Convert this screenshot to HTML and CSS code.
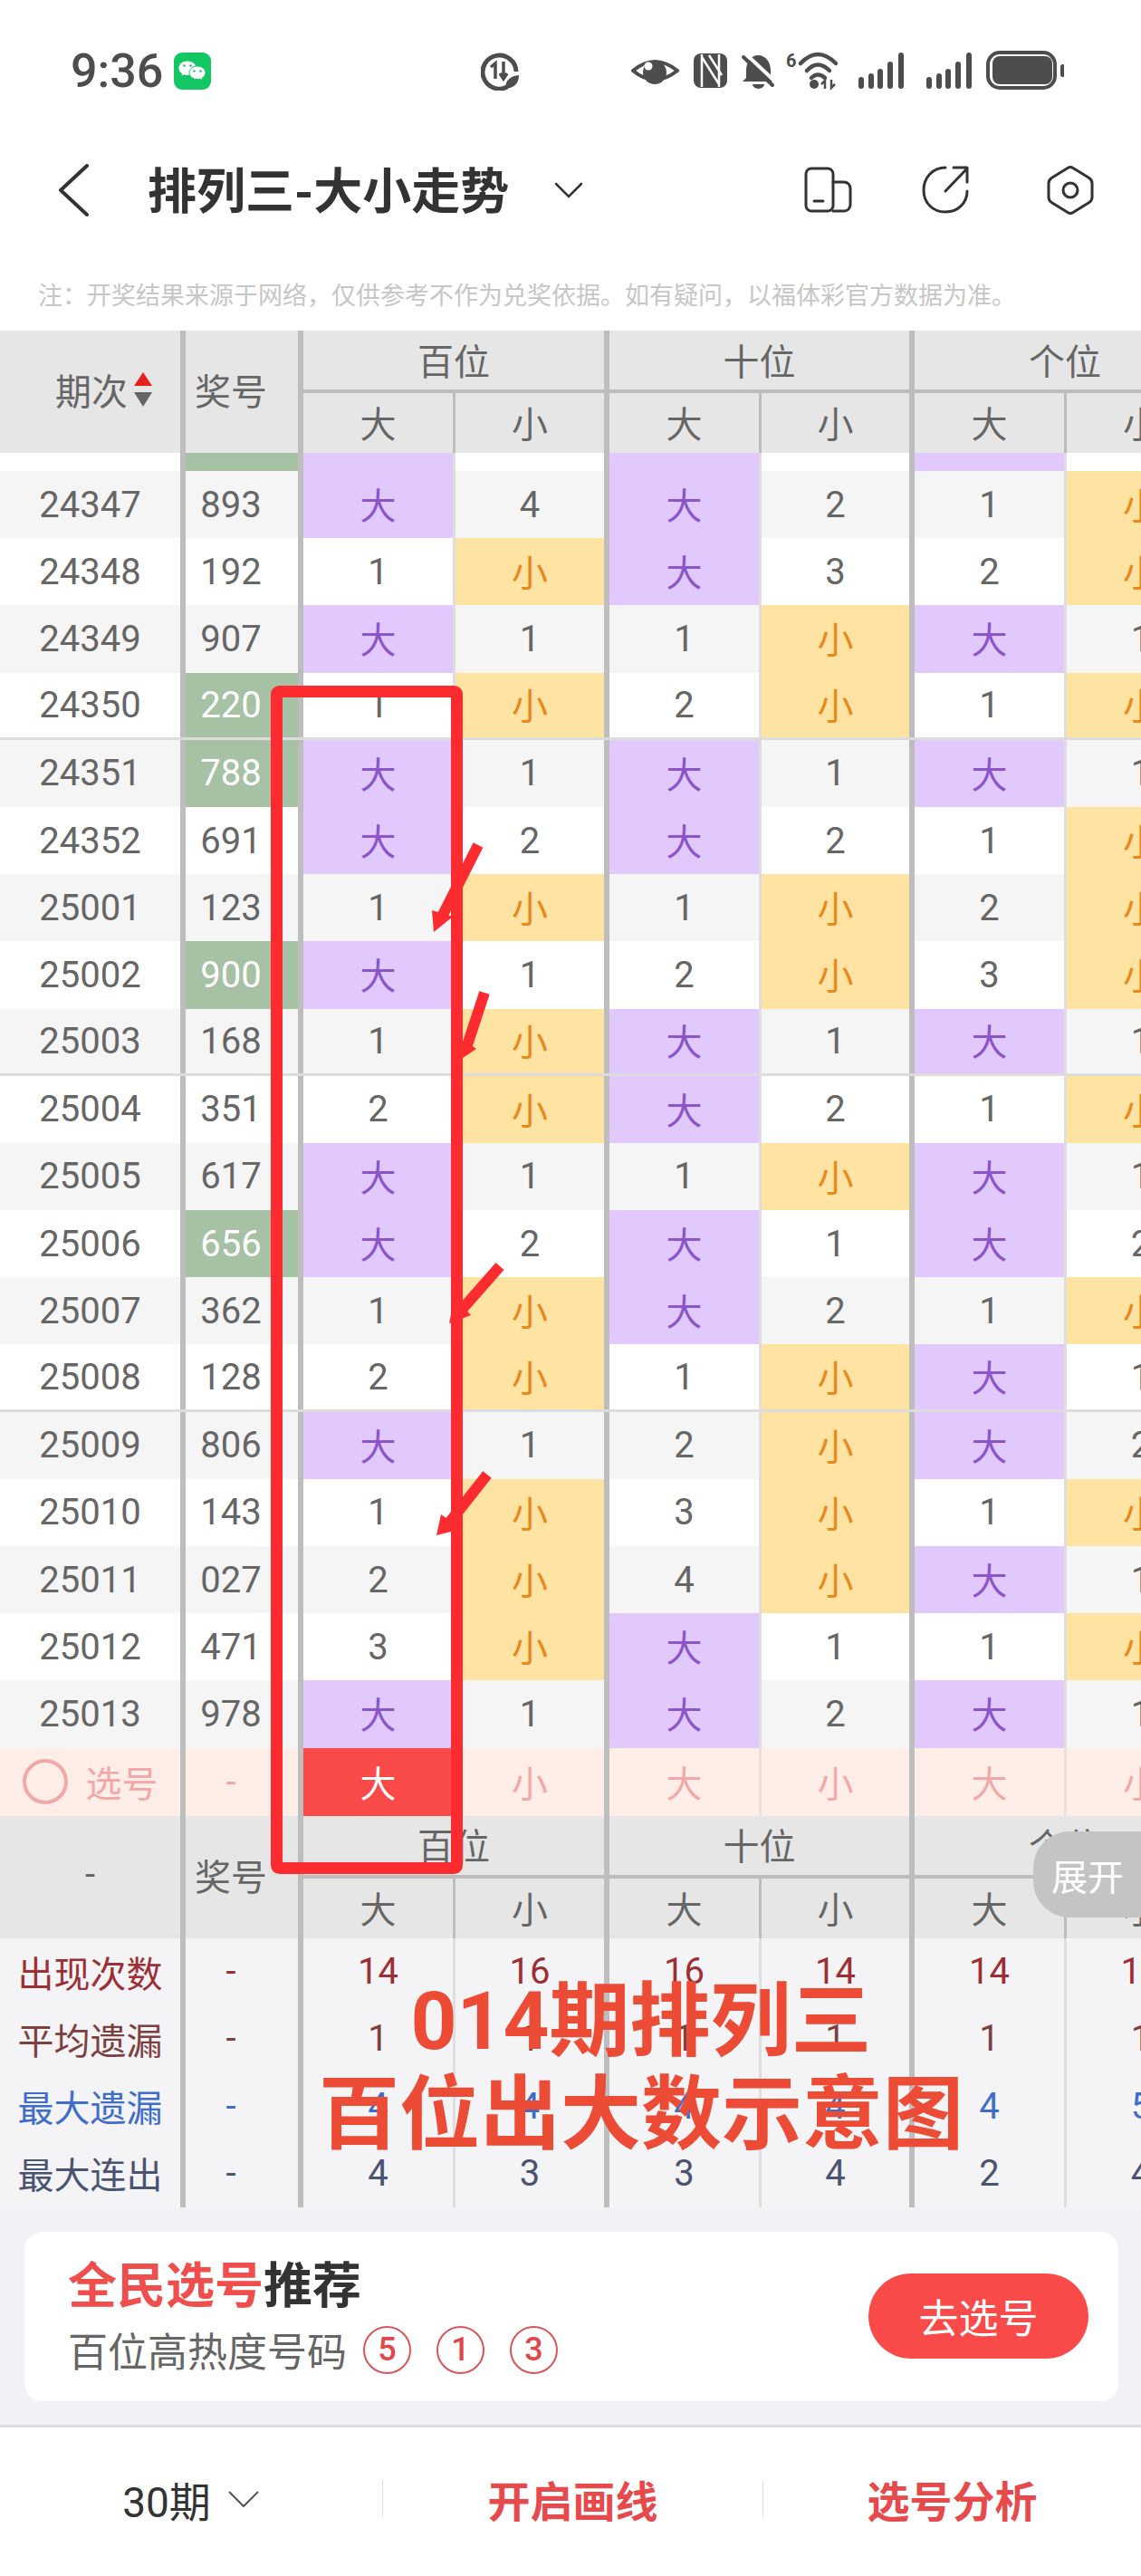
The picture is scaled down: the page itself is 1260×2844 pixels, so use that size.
FILE: index.html
```html
<!DOCTYPE html>
<html lang="zh-CN">
<head>
    <meta charset="UTF-8">
    <title>排列三-大小走势</title>
    <link rel="stylesheet" href="styles.css">
</head>
<body>
<div class="page">
    <!-- 状态栏 -->
    <div class="status">
        <span class="time">9:36</span>
        <svg class="wechat" width="41" height="41" viewBox="0 0 41 41">
            <rect width="41" height="41" rx="9" fill="#14c765"/>
            <path d="M15 9c-6 0-10 3.800-10 8.300 0 2.600 1.400 4.800 3.700 6.300l-.9 3 3.400-1.800c1.200.4 2.500.6 3.800.6C21 25.400 25 21.700 25 17.300 25 12.800 21 9 15 9z" fill="#fff" stroke="#14c765" stroke-width="1"/>
            <path d="M26 15c-5 0-9 3.300-9 7.300s4 7.300 9 7.300c1 0 2-.1 3-.4l3 1.600-.8-2.700c2.300-1.300 3.800-3.500 3.800-5.800 0-4-4-7.300-9-7.300z" fill="#fff" stroke="#14c765" stroke-width="1"/>
            <circle cx="11.500" cy="14.500" r="1.300" fill="#14c765"/><circle cx="18.500" cy="14.500" r="1.300" fill="#14c765"/>
            <circle cx="22.500" cy="20.500" r="1.200" fill="#14c765"/><circle cx="29.500" cy="20.500" r="1.200" fill="#14c765"/>
        </svg>
        <svg class="net" width="42" height="44" viewBox="531 56 42 44" fill="none" stroke="#4d4d4d">
            <path d="M560 96A18.500 18.500 0 1 1 570 79" stroke-width="5"/>
            <path d="M547 87V70L542 74M556 68V86M552 81L556 87L560 81" stroke-width="3.500"/>
            <path d="M558 98C558 88 564 84 573 83C573 92 568 97 558 98Z" fill="#4d4d4d" stroke="none"/>
        </svg>
        <svg class="tray" width="478" height="46" viewBox="697 55 478 46" fill="none" stroke="#4d4d4d">
            <path d="M699 78Q723 58 748 78Q723 98 699 78Z" stroke-width="4" stroke-linejoin="round"/>
            <circle cx="723" cy="80" r="13" fill="#4d4d4d" stroke="none"/>
            <circle cx="716" cy="73" r="4.500" fill="#fff" stroke="none"/>
            <rect x="766" y="59" width="37" height="38" rx="8" fill="#4d4d4d" stroke="none"/>
            <path d="M775 60V96M794 60V96M775 63L794 93M783 61L797 83" stroke="#fff" stroke-width="2.500"/>
            <path d="M837 61C846 61 851 69 851 78V86L855 90H820L824 86V78C824 69 829 61 837 61Z" fill="#4d4d4d" stroke="none"/>
            <path d="M831 93H844A6.500 5 0 0 1 831 93Z" fill="#4d4d4d" stroke="none"/>
            <path d="M824 60L857 91" stroke="#fff" stroke-width="4"/>
            <path d="M821 63L853 94" stroke-width="4" stroke-linecap="round"/>
            <text class="wifi-six" x="868" y="74">6</text>
            <path d="M884 70Q903 50 923 70M891 78Q903 65 916 78M896 86Q903 79 911 86" stroke-width="4.500" stroke-linecap="round"/>
            <circle cx="899" cy="93" r="5" fill="#4d4d4d" stroke="none"/>
            <path d="M911 98V89L907 93M918 88V97L922 93" stroke-width="2.500"/>
            <g stroke-width="6" stroke-linecap="round">
                <path d="M951 88V95M962 84V95M972 79V95M983 71V95M995 61V95"/>
                <path d="M1026 88V95M1037 84V95M1047 79V95M1058 71V95M1070 61V95"/>
            </g>
            <rect x="1091" y="58" width="74" height="39" rx="13" stroke-width="4"/>
            <rect x="1096" y="62" width="66" height="31" rx="8" fill="#4d4d4d" stroke="none"/>
            <rect x="1171" y="71" width="5" height="14" rx="2.500" fill="#4d4d4d" stroke="none"/>
        </svg>
    </div>

    <!-- 标题栏 -->
    <div class="nav">
        <svg class="back" width="35" height="58" viewBox="64 182 35 58" fill="none" stroke="#333" stroke-width="4" stroke-linecap="round" stroke-linejoin="round">
            <path d="M96 184L67 211L96 238"/>
        </svg>
        <h1 class="title">排列三-大小走势</h1>
        <svg class="drop" width="32" height="18" viewBox="612 201 32 18" fill="none" stroke="#333" stroke-width="2.500" stroke-linecap="round">
            <path d="M614 203L628 217L642 203"/>
        </svg>
        <div class="nav-tools">
            <svg width="54" height="52" viewBox="890 187 54 52" fill="none" stroke="#333" stroke-width="3" stroke-linecap="round">
                <rect x="892" y="189" width="30" height="47" rx="6"/>
                <path d="M922 204H934A7 7 0 0 1 941 211V229A7 7 0 0 1 934 236H922M901 225H911"/>
            </svg>
            <svg width="52" height="54" viewBox="1019 186 52 54" fill="none" stroke="#333" stroke-width="3" stroke-linecap="round" stroke-linejoin="round">
                <path d="M1045 188C1031 188 1021 199 1021 213C1021 227 1031 237 1045 237C1059 237 1069 227 1069 214"/>
                <path d="M1045 214L1068 190M1054 188H1069V204"/>
            </svg>
            <svg width="52" height="56" viewBox="1156 184 52 56" fill="none" stroke="#333" stroke-width="3">
                <path d="M1179 187.500Q1182 185.500 1185 187.500L1202 198Q1206 200.500 1206 204V220Q1206 223.500 1202 226L1185 236.500Q1182 238.500 1179 236.500L1162 226Q1158 223.500 1158 220V204Q1158 200.500 1162 198Z"/>
                <circle cx="1182" cy="212" r="8"/>
            </svg>
        </div>
    </div>

    <p class="note">注：开奖结果来源于网络，仅供参考不作为兑奖依据。如有疑问，以福体彩官方数据为准。</p>

    <!-- 走势表 -->
    <div class="chart">
        <div class="head">
            <div class="head-cell span-rows issue">期次<span class="sort"><i class="up"></i><i class="down"></i></span></div>
            <div class="head-cell span-rows prize">奖号</div>
            <div class="head-cell group">百位</div>
            <div class="head-cell group">十位</div>
            <div class="head-cell group">个位</div>
            <div class="head-cell">大</div><div class="head-cell thick">小</div>
            <div class="head-cell">大</div><div class="head-cell thick">小</div>
            <div class="head-cell">大</div><div class="head-cell thick">小</div>
        </div>

        <div class="row sliver"><span></span><span class="hit"></span><span class="da"></span><span></span><span class="da"></span><span></span><span class="da"></span><span></span></div>
        <div class="row"><span>24347</span><span>893</span><span class="da">大</span><span>4</span><span class="da">大</span><span>2</span><span>1</span><span class="xiao">小</span></div>
        <div class="row"><span>24348</span><span>192</span><span>1</span><span class="xiao">小</span><span class="da">大</span><span>3</span><span>2</span><span class="xiao">小</span></div>
        <div class="row"><span>24349</span><span>907</span><span class="da">大</span><span>1</span><span>1</span><span class="xiao">小</span><span class="da">大</span><span>1</span></div>
        <div class="row mark"><span>24350</span><span class="hit">220</span><span>1</span><span class="xiao">小</span><span>2</span><span class="xiao">小</span><span>1</span><span class="xiao">小</span></div>
        <div class="row"><span>24351</span><span class="hit">788</span><span class="da">大</span><span>1</span><span class="da">大</span><span>1</span><span class="da">大</span><span>1</span></div>
        <div class="row"><span>24352</span><span>691</span><span class="da">大</span><span>2</span><span class="da">大</span><span>2</span><span>1</span><span class="xiao">小</span></div>
        <div class="row"><span>25001</span><span>123</span><span>1</span><span class="xiao">小</span><span>1</span><span class="xiao">小</span><span>2</span><span class="xiao">小</span></div>
        <div class="row"><span>25002</span><span class="hit">900</span><span class="da">大</span><span>1</span><span>2</span><span class="xiao">小</span><span>3</span><span class="xiao">小</span></div>
        <div class="row mark"><span>25003</span><span>168</span><span>1</span><span class="xiao">小</span><span class="da">大</span><span>1</span><span class="da">大</span><span>1</span></div>
        <div class="row"><span>25004</span><span>351</span><span>2</span><span class="xiao">小</span><span class="da">大</span><span>2</span><span>1</span><span class="xiao">小</span></div>
        <div class="row"><span>25005</span><span>617</span><span class="da">大</span><span>1</span><span>1</span><span class="xiao">小</span><span class="da">大</span><span>1</span></div>
        <div class="row"><span>25006</span><span class="hit">656</span><span class="da">大</span><span>2</span><span class="da">大</span><span>1</span><span class="da">大</span><span>2</span></div>
        <div class="row"><span>25007</span><span>362</span><span>1</span><span class="xiao">小</span><span class="da">大</span><span>2</span><span>1</span><span class="xiao">小</span></div>
        <div class="row mark"><span>25008</span><span>128</span><span>2</span><span class="xiao">小</span><span>1</span><span class="xiao">小</span><span class="da">大</span><span>1</span></div>
        <div class="row"><span>25009</span><span>806</span><span class="da">大</span><span>1</span><span>2</span><span class="xiao">小</span><span class="da">大</span><span>2</span></div>
        <div class="row"><span>25010</span><span>143</span><span>1</span><span class="xiao">小</span><span>3</span><span class="xiao">小</span><span>1</span><span class="xiao">小</span></div>
        <div class="row"><span>25011</span><span>027</span><span>2</span><span class="xiao">小</span><span>4</span><span class="xiao">小</span><span class="da">大</span><span>1</span></div>
        <div class="row"><span>25012</span><span>471</span><span>3</span><span class="xiao">小</span><span class="da">大</span><span>1</span><span>1</span><span class="xiao">小</span></div>
        <div class="row"><span>25013</span><span>978</span><span class="da">大</span><span>1</span><span class="da">大</span><span>2</span><span class="da">大</span><span>1</span></div>

        <div class="row pick"><span><i class="pick-ring"></i>选号</span><span>-</span><span class="picked">大</span><span>小</span><span>大</span><span>小</span><span>大</span><span>小</span></div>

        <div class="head">
            <div class="head-cell span-rows">-</div>
            <div class="head-cell span-rows prize">奖号</div>
            <div class="head-cell group">百位</div>
            <div class="head-cell group">十位</div>
            <div class="head-cell group">个位</div>
            <div class="head-cell">大</div><div class="head-cell thick">小</div>
            <div class="head-cell">大</div><div class="head-cell thick">小</div>
            <div class="head-cell">大</div><div class="head-cell thick">小</div>
        </div>

        <div class="row stat stat-count"><span>出现次数</span><span>-</span><span>14</span><span>16</span><span>16</span><span>14</span><span>14</span><span>16</span></div>
        <div class="row stat stat-avg"><span>平均遗漏</span><span>-</span><span>1</span><span>1</span><span>1</span><span>1</span><span>1</span><span>1</span></div>
        <div class="row stat stat-miss"><span>最大遗漏</span><span>-</span><span>4</span><span>4</span><span>4</span><span>4</span><span>4</span><span>5</span></div>
        <div class="row stat stat-run"><span>最大连出</span><span>-</span><span>4</span><span>3</span><span>3</span><span>4</span><span>2</span><span>4</span></div>
    </div>

    <!-- 推荐卡片 -->
    <div class="promo-wrap">
        <div class="promo">
            <div class="promo-text">
                <div class="promo-title"><em>全民选号</em>推荐</div>
                <div class="promo-sub">百位高热度号码<b class="ball">5</b><b class="ball">1</b><b class="ball">3</b></div>
            </div>
            <div class="go-btn">去选号</div>
        </div>
    </div>

    <!-- 底部栏 -->
    <div class="footer">
        <div class="foot-item period">30期
            <svg width="36" height="20" viewBox="0 0 36 20" fill="none" stroke="#555" stroke-width="2">
                <path d="M2 2L18 18L34 2"/>
            </svg>
        </div>
        <div class="foot-item link">开启画线</div>
        <div class="foot-item link">选号分析</div>
    </div>

    <!-- 截图上的手绘标记 -->
    <svg class="marks" width="1260" height="2844" viewBox="0 0 1260 2844" fill="none" stroke="#fb2b30">
        <rect x="305.500" y="763.500" width="199" height="1299" rx="3" stroke-width="13"/>
        <g stroke-width="12">
            <path d="M528 933L488 1012"/>
            <path d="M535 1096L514 1160"/>
            <path d="M552 1398L508 1448"/>
            <path d="M538 1628L497 1680"/>
        </g>
        <g fill="#fb2b30" stroke="none">
            <path d="M479 1029L477 1005L500 1012Z"/>
            <path d="M508 1170L512 1148L526 1158Z"/>
            <path d="M496 1461L502 1432L520 1452Z"/>
            <path d="M482 1695L487 1672L510 1688Z"/>
        </g>
    </svg>
    <div class="expand">展开</div>
    <div class="caption">014期排列三<br>百位出大数示意图</div>
</div>
</body>
</html>
```

FILE: styles.css
```css
* {
    box-sizing: border-box;
}
html, body {
    margin: 0;
    padding: 0;
}
body {
    font-family: Roboto, "Noto Sans CJK SC", sans-serif;
    background-color: #fff;
}
.page {
    position: relative;
    width: 1260px;
    height: 2844px;
    overflow: hidden;
    background-color: #fff;
}

/* 状态栏 */
.status {
    display: flex;
    align-items: center;
    height: 156px;
    padding-left: 78px;
    padding-right: 85px;
}
.time {
    width: 114px;
    font-size: 52px;
    font-weight: 500;
    color: #4d4d4d;
}
.net {
    margin-left: 298px;
}
.tray {
    margin-left: auto;
}
.wifi-six {
    font-family: Roboto, sans-serif;
    font-size: 20px;
    font-weight: 700;
    fill: #4d4d4d;
    stroke: none;
}

/* 标题栏 */
.nav {
    display: flex;
    align-items: center;
    height: 108px;
    padding-left: 64px;
    padding-right: 52px;
}
.title {
    margin: 0 0 5px 64px;
    font-size: 54px;
    font-weight: 700;
    color: #333;
    white-space: nowrap;
}
.drop {
    margin-left: 50px;
}
.nav-tools {
    display: flex;
    align-items: center;
    gap: 76px;
    margin-left: auto;
}
.nav-tools svg:last-child {
    margin-left: 10px;
}
.note {
    height: 101px;
    margin: 0;
    padding: 45px 0 0 42px;
    font-size: 27px;
    line-height: 36px;
    color: #c6c6c6;
    white-space: nowrap;
}

/* 走势表 */
.chart {
    --cols: 205px 130px 168px 170px 168px 169px 168px 170px;
    overflow: hidden;
    font-size: 40px;
    color: #666;
}
.head {
    display: grid;
    grid-template-columns: var(--cols);
    grid-template-rows: 69px 66px;
    background-color: #e6e6e6;
}
.head-cell {
    display: flex;
    align-items: center;
    justify-content: center;
    padding-bottom: 2px;
    border-right: 3px solid #bdbdbd;
}
.head-cell.span-rows {
    grid-row: span 2;
    padding-bottom: 5px;
    border-right-width: 6px;
}
.head-cell.issue {
    padding-left: 30px;
}
.head-cell.prize {
    padding-right: 24px;
}
.head-cell.group {
    grid-column: span 2;
    border-right-width: 6px;
    border-bottom: 4px solid #bdbdbd;
}
.head-cell.thick {
    border-right-width: 6px;
}
.sort {
    display: flex;
    flex-direction: column;
    gap: 7px;
    margin-left: 7px;
}
.sort i {
    display: block;
    width: 0;
    height: 0;
    border-left: 10px solid transparent;
    border-right: 10px solid transparent;
}
.sort .up {
    border-bottom: 15px solid #e8211f;
}
.sort .down {
    border-top: 16px solid #666;
}

.row {
    display: grid;
    grid-template-columns: var(--cols);
    height: 74.2px;
    background-color: #fff;
}
.row:nth-child(odd) {
    background-color: #f5f5f5;
}
.row span {
    display: flex;
    align-items: center;
    justify-content: center;
    border-right: 3px solid #dedede;
}
.row span:nth-child(1),
.row span:nth-child(2),
.row span:nth-child(4),
.row span:nth-child(6),
.row span:nth-child(8) {
    border-right: 6px solid #bdbdbd;
}
.row span:nth-child(2) {
    padding-right: 24px;
}
.row.sliver {
    height: 20px;
    background-color: #fff;
}
.row.mark {
    border-bottom: 3px solid #dcdcdc;
}
.row span.da {
    padding-bottom: 2px;
    background-color: #e1c8fd;
    color: #8b55c9;
}
.row span.xiao {
    padding-bottom: 2px;
    background-color: #ffe3a3;
    color: #e8891c;
}
.hit {
    background-color: #a6c1a4;
    color: #fff;
}

.row.pick {
    height: 75px;
    background-color: #ffeee8;
    color: #f3a8a8;
}
.row.pick span {
    border-right-color: #e8e2de;
}
.row.pick span:nth-child(1),
.row.pick span:nth-child(2),
.row.pick span:nth-child(4),
.row.pick span:nth-child(6) {
    border-right-color: #bdbdbd;
}
.pick-ring {
    display: block;
    width: 50px;
    height: 50px;
    margin-right: 20px;
    border: 4px solid #f3a8a8;
    border-radius: 50%;
}
.row.pick span.picked {
    background-color: #fb4a4a;
    color: #fff;
}

.row.stat {
    height: 74.25px;
    background-color: #f4f4f7;
}
.stat-count {
    color: #9c2f34;
}
.stat-avg {
    color: #7d3f3f;
}
.stat-miss {
    color: #3f6ec9;
}
.stat-run {
    color: #4a5370;
}

/* 推荐卡片 */
.promo-wrap {
    height: 243px;
    padding: 27px 25px 0 27px;
    background-color: #f1f2f6;
    border-bottom: 3px solid #ddd;
}
.promo {
    display: flex;
    align-items: center;
    justify-content: space-between;
    height: 187px;
    padding: 0 33px 0 48px;
    background-color: #fff;
    border-radius: 20px;
}
.promo-text {
    padding-top: 4px;
}
.promo-title {
    font-size: 54px;
    font-weight: 700;
    line-height: 66px;
    color: #333;
}
.promo-title em {
    font-style: normal;
    color: #f04d4d;
}
.promo-sub {
    display: flex;
    align-items: center;
    margin-top: 4px;
    font-size: 44px;
    color: #666;
}
.ball {
    display: flex;
    align-items: center;
    justify-content: center;
    width: 53px;
    height: 53px;
    margin-left: 28px;
    border: 2px solid #d8555a;
    border-radius: 50%;
    font-size: 36px;
    font-weight: 500;
    color: #e0474c;
}
.ball:first-of-type {
    margin-left: 18px;
}
.go-btn {
    display: flex;
    align-items: center;
    justify-content: center;
    width: 243px;
    height: 94px;
    background-color: #fb4a4a;
    border-radius: 47px;
    font-size: 44px;
    color: #fff;
}

/* 底部栏 */
.footer {
    display: grid;
    grid-template-columns: 422px 420px 418px;
    align-items: center;
    height: 164px;
    padding-bottom: 6px;
    background-color: #fff;
}
.foot-item {
    display: flex;
    align-items: center;
    justify-content: center;
    height: 41px;
    font-size: 47px;
    color: #333;
    border-left: 1px solid #e0e0e0;
}
.foot-item.period {
    gap: 18px;
    font-size: 46px;
    border-left: none;
}
.foot-item.link {
    font-weight: 700;
    color: #e64a4d;
}

/* 盖在表上的标记 */
.marks {
    position: absolute;
    top: 0;
    left: 0;
}
.expand {
    position: absolute;
    top: 2022px;
    right: 0;
    display: flex;
    align-items: center;
    width: 119px;
    height: 95px;
    padding-left: 20px;
    background-color: #c4c4c4;
    border-radius: 40px 0 0 40px;
    font-size: 40px;
    color: #fff;
}
.caption {
    position: absolute;
    top: 2180px;
    left: 340px;
    width: 736px;
    font-size: 89px;
    font-weight: 700;
    line-height: 103px;
    text-align: center;
    color: #ec4b35;
    white-space: nowrap;
}
```
